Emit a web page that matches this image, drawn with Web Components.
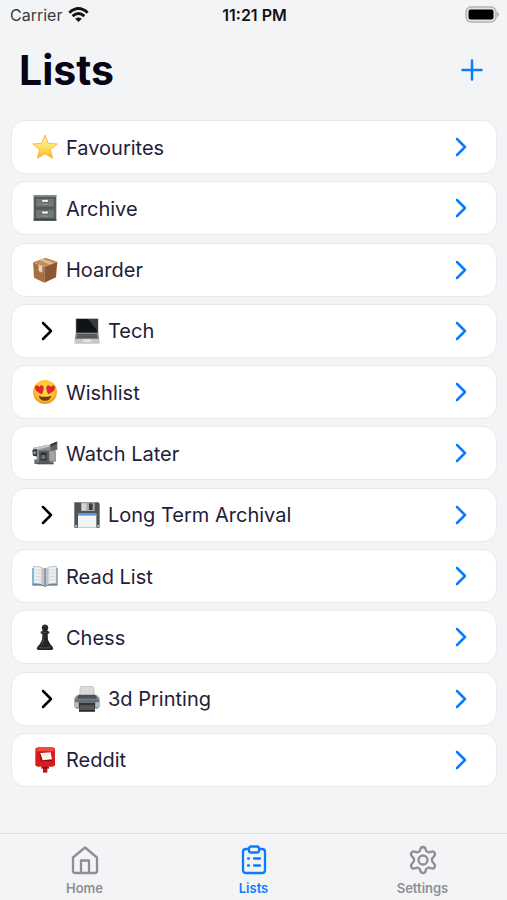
<!DOCTYPE html>
<html lang="en">
<head>
<meta charset="utf-8">
<meta name="viewport" content="width=device-width, initial-scale=1">
<title>Lists</title>
<style>
    body {
        margin: 0;
        background: #f3f4f6;
        color: #1f2138;
        font-family: Inter, "Liberation Sans", sans-serif;
    }
</style>
</head>
<body>
<lists-screen></lists-screen>

<script>
const EMOJI = {
    star: `
        <linearGradient id="g" x1="0" y1="0" x2="0" y2="1"><stop offset="0" stop-color="#fff3b0"/><stop offset=".5" stop-color="#ffe36a"/><stop offset="1" stop-color="#fbb414"/></linearGradient>
        <path d="M39 3 49 28 76 30 55 47 62 73 39 59 16 73 23 47 2 30 29 28Z" fill="url(#g)" stroke="#f2b13c" stroke-width="2.5" stroke-linejoin="round"/>`,
    cabinet: `
        <path d="M5 1h68v76H5z" fill="#59605f"/>
        <path d="M5 1h68v5H5z" fill="#7d8584"/>
        <path d="M11 10h56v26H11zM11 43h56v27H11z" fill="#727978" stroke="#454b4b" stroke-width="2"/>
        <path d="M29 13h20v9H29zM29 48h20v9H29z" fill="#f6f7f7" stroke="#3f4545" stroke-width="2"/>
        <path d="M31 26h16v4H31zM31 61h16v4H31z" fill="#8b9190"/>
        <path d="M5 72h68v5H5z" fill="#404646"/>`,
    box: `
        <path d="M3 16 37 29V77L6 62Z" fill="#a86f3f"/>
        <path d="M37 29 76 14 72 61 37 77Z" fill="#8d5831"/>
        <path d="M3 16 41 2 76 14 37 29Z" fill="#c48b58"/>
        <path d="M22 9 32 5 65 18 54 23Z" fill="#dfbd91"/>
        <path d="M20 23 31 27V47L20 42Z" fill="#e3d4c3"/>`,
    laptop: `
        <path d="M5 1h68v47H5z" fill="#96999b"/>
        <path d="M7 3h64v41H7z" fill="#111314"/>
        <path d="M42 3h29v37z" fill="#383b3d"/>
        <path d="M5 46h68l3 24H2z" fill="#818486"/>
        <path d="M10 49h58l2 11H8z" fill="#4b4e50"/>
        <path d="M9 53h61M8 57h62" stroke="#888b8d" stroke-width="1"/>
        <path d="M3 63h72l2 14H1z" fill="#c4c6c7"/>
        <path d="M28 64h22l2 9H26z" fill="#e3e4e5"/>`,
    hearts: `
        <radialGradient id="g" cx=".5" cy=".4" r=".6"><stop offset="0" stop-color="#ffe24f"/><stop offset=".65" stop-color="#fdc42e"/><stop offset="1" stop-color="#ef9219"/></radialGradient>
        <circle cx="39" cy="39" r="36" fill="url(#g)"/>
        <path d="M29 46C17 41 8 34 9 25 10 18 18 18 22 24 26 17 34 17 35 25 36 32 33 40 29 46Z" fill="#e6262c"/>
        <path d="M49 46C61 41 70 34 69 25 68 18 60 18 56 24 52 17 44 17 43 25 42 32 45 40 49 46Z" fill="#e6262c"/>
        <path d="M20 50q19 7 38 0-4 15-19 15T20 50Z" fill="#753810"/>`,
    camera: `
        <path d="M4 23 46 14 62 16V68H14V49H7L2 43Z" fill="#8d9092"/>
        <path d="M3 24 45 14 58 18 17 29Z" fill="#c7c9ca"/>
        <path d="M56 16 76 5V29L56 34Z" fill="#606365"/>
        <path d="M55 13 72 5 76 5 73 12 55 20Z" fill="#37393a"/>
        <path d="M1 30 15 27V49L3 47Z" fill="#36393b"/>
        <circle cx="8" cy="38" r="5" fill="#82878a"/>
        <path d="M21 32H53V68H21Z" fill="#55585a"/>
        <path d="M26 38H43V61H26Z" fill="#2b2d2f"/>
        <circle cx="34" cy="51" r="7" fill="#707477"/>
        <path d="M51 32H70V64H51Z" fill="#a2a4a5" stroke="#66696b" stroke-width="2"/>
        <path d="M7 58h12v14H7z" fill="#717476"/>
        <path d="M15 67H65V73H15Z" fill="#515456"/>`,
    floppy: `
        <path d="M1 1h72l4 4v72H1z" fill="#505254"/>
        <path d="M21 1h41v26H21z" fill="#a9acad"/>
        <path d="M45 4h11v20H45z" fill="#3a3d3e"/>
        <path d="M24 4h13v21H24z" fill="#d3d4d5"/>
        <path d="M12 35h55v42H12z" fill="#f2f3f3"/>
        <path d="M12 35h55v6H12z" fill="#5e9ddb"/>
        <path d="M4 69h5v5H4zM70 69h5v5h-5z" fill="#ced0d1"/>`,
    book: `
        <path d="M1 15H77V68H1Z" fill="#4c93bb"/>
        <path d="M5 10Q25 8 39 18 53 8 73 10V62Q53 60 39 68 25 60 5 62Z" fill="#eceeef" stroke="#a9afb2" stroke-width="2"/>
        <path d="M39 18V67L28 62V13ZM39 18V67L50 62V13Z" fill="#c0c5c8"/>
        <path d="M39 18v50" stroke="#666f75" stroke-width="3"/>
        <path d="M11 21q9-2 18 2M11 31q9-2 18 2M11 41q9-2 18 2M11 51q9-2 18 2M67 21q-9-2-18 2M67 31q-9-2-18 2M67 41q-9-2-18 2M67 51q-9-2-18 2" fill="none" stroke="#c8cdd0" stroke-width="2"/>
        <path d="M4 64q20-2 35 6 15-8 35-6" fill="none" stroke="#73838e" stroke-width="3"/>`,
    pawn: `
        <path d="M32 4q7-5 14 0l3 7-3 9 6 3v5l-5 2 1 18 8 14 5 5 3 7-4 4q-21 4-42 0l-4-4 3-7 5-5 8-14 1-18-5-2v-5l6-3-3-9Z" fill="#242626"/>
        <path d="M34 7q4-3 7 0M31 25h12M34 33v17l-6 13M20 70q18 4 35 0" fill="none" stroke="#5d6161" stroke-width="2"/>`,
    printer: `
        <path d="M19 4q2-3 6-3h28q4 0 6 3l3 31H16Z" fill="#d9dbdb" stroke="#b0b3b3" stroke-width="2"/>
        <path d="M8 28H70L77 37V62L71 68H7L1 62V37Z" fill="#8c969c"/>
        <path d="M14 26H64L70 38H8Z" fill="#4c5257"/>
        <path d="M3 40H75V49H3Z" fill="#697178"/>
        <path d="M3 49h10v14H3zM65 49h10v14H65z" fill="#b4bfc6"/>
        <path d="M15 50H63V76H15Z" fill="#35383b"/>
        <path d="M18 58H60L63 72H15Z" fill="#54585b"/>
        <path d="M15 72H63V77H15Z" fill="#242628"/>`,
    postbox: `
        <path d="M33 56H46V77H33Z" fill="#b81718"/>
        <path d="M10 9q0-8 9-8h41q9 0 9 8v43q0 7-9 7H19q-9 0-9-7Z" fill="#d91b1f"/>
        <path d="M13 8q1-5 8-5h37q7 0 8 5v5H13Z" fill="#f3483b"/>
        <path d="M22 16H57L61 43H27Z" fill="#8c1012"/>
        <path d="M25 18 56 16 60 37 32 40Z" fill="#fff6ef"/>
        <path d="M25 18 43 28 56 16" fill="none" stroke="#dfc9c1" stroke-width="2"/>
        <path d="M28 59h23v6H28z" fill="#8f1113"/>`
};

const TAB_ICONS = {
    home: '<path d="M3 12.5 15 2.5l12 10V26q0 2-2 2H5q-2 0-2-2ZM11 28V15.5h8V28"/>',
    lists: '<path d="M10 4H7Q4 4 4 7v18q0 3 3 3h16q3 0 3-3V7q0-3-3-3h-3"/><rect x="10" y="1.5" width="10" height="6" rx="2"/><path d="M9 13.5h1M15 13.5h6M9 20.5h1M15 20.5h6"/>',
    settings: '<path d="M12.3 4.5Q12.7 2 15 2t2.7 2.5q.5 2.500 3 2.800 1 .1 2.200-.6 2.400-1 3.600 1 1.200 2-.6 3.800-2 1.500-2 3.500t2 3.500q1.800 1.800.6 3.800-1.200 2-3.600 1-1.200-.7-2.200-.6-2.500.3-3 2.800Q17.300 28 15 28t-2.700-2.500q-.5-2.500-3-2.800-1-.1-2.200.6-2.400 1-3.600-1-1.200-2 .6-3.800 2-1.500 2-3.500t-2-3.500Q2.300 9.700 3.500 7.700q1.200-2 3.600-1 1.200.7 2.200.6 2.500-.3 3-2.800Z"/><circle cx="15" cy="15" r="4.5"/>'
};

class StatusBar extends HTMLElement {
    constructor() {
        super();
        this.attachShadow({ mode: 'open' });
        this.shadowRoot.innerHTML = `
        <style>
            :host {
                display: grid;
                grid-template-columns: 1fr auto 1fr;
                align-items: center;
                height: 30px;
                padding: 0 8px 0 10px;
                font-size: 16px;
                color: #111214;
            }
            .carrier { display: flex; align-items: center; gap: 6px; color: #3a3b3e; }
            .time { font-weight: 600; }
            .battery { justify-self: end; }
            svg { display: block; }
        </style>
        <span class="carrier">Carrier
            <svg width="21" height="16" viewBox="0 0 21 16" fill="none" stroke="#111214" stroke-width="2.8" aria-hidden="true">
                <path d="M1.3 5.7Q10.5-2.7 19.7 5.7M4.6 9.1q5.9-5.2 11.8 0"/>
                <path d="M7.200 11.700q3.300-2.500 6.600 0L10.500 15Z" fill="#111214" stroke="none"/>
            </svg>
        </span>
        <span class="time">11:21 PM</span>
        <svg class="battery" width="34" height="18" viewBox="0 0 34 18" role="img" aria-label="Battery full">
            <rect x="1" y="1" width="30" height="15" rx="5" fill="#e5e5e5" stroke="#b2b3b4" stroke-width="1.5"/>
            <rect x="3.500" y="3.500" width="25" height="10" rx="2" fill="#000"/>
            <path d="M32 6q2 .7 2 2.500t-2 2.500Z" fill="#b2b3b4"/>
        </svg>`;
    }
}

class PageHeader extends HTMLElement {
    constructor() {
        super();
        this.attachShadow({ mode: 'open' });
        this.shadowRoot.innerHTML = `
        <style>
            :host {
                display: flex;
                align-items: center;
                justify-content: space-between;
                padding: 15px 19px 25px;
            }
            h1 { margin: 0; font-size: 41px; line-height: 50px; font-weight: 700; color: #050516; }
            button { display: flex; padding: 4px; border: 0; background: none; color: #0a7cff; }
        </style>
        <h1><slot></slot></h1>
        <button type="button" aria-label="New list">
            <svg width="24" height="24" viewBox="0 0 24 24" fill="none" stroke="currentColor" stroke-width="2.5" stroke-linecap="round">
                <path d="M12 2.500v19M2.500 12h19"/>
            </svg>
        </button>`;
    }
}

class ListRow extends HTMLElement {
    constructor() {
        super();
        this.attachShadow({ mode: 'open' });
        const chevron = '<svg class="chevron" width="12" height="20" viewBox="0 0 12 20" aria-hidden="true"><path d="M2 2l8 8-8 8"/></svg>';
        const expander = this.hasAttribute('nested')
            ? `<button type="button" aria-label="Expand" aria-expanded="false">${chevron}</button>` : '';
        this.shadowRoot.innerHTML = `
        <style>
            :host {
                display: flex;
                align-items: stretch;
                box-sizing: border-box;
                height: 54px;
                padding-left: 20px;
                border: 1px solid #e7e9ec;
                border-radius: 14px;
                background: #fff;
            }
            button {
                display: flex;
                align-items: center;
                padding: 0 21px 0 9px;
                border: 0;
                background: none;
                color: #000;
            }
            a {
                display: flex;
                flex: 1;
                align-items: center;
                gap: 8px;
                padding-right: 29px;
                color: inherit;
                text-decoration: none;
                font-size: 20px;
                line-height: 28px;
            }
            .name { flex: 1; padding-top: 1px; }
            .chevron { fill: none; stroke: currentColor; stroke-width: 2.5; stroke-linecap: round; stroke-linejoin: round; }
            a .chevron { color: #0a7cff; }
        </style>
        ${expander}
        <a href="#">
            <svg width="26" height="26" viewBox="0 0 78 78" aria-hidden="true">${EMOJI[this.getAttribute('icon')]}</svg>
            <span class="name"><slot></slot></span>
            ${chevron}
        </a>`;
    }
}

class TabItem extends HTMLElement {
    constructor() {
        super();
        this.attachShadow({ mode: 'open' });
        this.shadowRoot.innerHTML = `
        <style>
            :host { display: block; flex: 1; color: #8e8f92; }
            :host([active]) { color: #0a7cff; }
            a {
                display: flex;
                flex-direction: column;
                align-items: center;
                gap: 5px;
                color: inherit;
                text-decoration: none;
                font-size: 13px;
                line-height: 16px;
                font-weight: 600;
            }
            svg { fill: none; stroke: currentColor; stroke-width: 2.3; stroke-linecap: round; stroke-linejoin: round; }
        </style>
        <a href="#">
            <svg width="30" height="30" viewBox="0 0 30 30" aria-hidden="true">${TAB_ICONS[this.getAttribute('icon')]}</svg>
            <slot></slot>
        </a>`;
    }
}

class ListsScreen extends HTMLElement {
    constructor() {
        super();
        this.attachShadow({ mode: 'open' });
        this.shadowRoot.innerHTML = `
        <style>
            :host { display: flex; flex-direction: column; min-height: 100vh; }
            main {
                display: flex;
                flex: 1;
                flex-direction: column;
                justify-content: space-between;
                gap: 7px;
                padding: 0 10px 46px 11px;
            }
            nav { display: flex; padding: 11px 0 4px; border-top: 1px solid #dfe1e4; }
        </style>
        <status-bar></status-bar>
        <page-header>Lists</page-header>
        <main>
            <list-row icon="star">Favourites</list-row>
            <list-row icon="cabinet">Archive</list-row>
            <list-row icon="box">Hoarder</list-row>
            <list-row icon="laptop" nested>Tech</list-row>
            <list-row icon="hearts">Wishlist</list-row>
            <list-row icon="camera">Watch Later</list-row>
            <list-row icon="floppy" nested>Long Term Archival</list-row>
            <list-row icon="book">Read List</list-row>
            <list-row icon="pawn">Chess</list-row>
            <list-row icon="printer" nested>3d Printing</list-row>
            <list-row icon="postbox">Reddit</list-row>
        </main>
        <nav aria-label="Tabs">
            <tab-item icon="home">Home</tab-item>
            <tab-item icon="lists" active>Lists</tab-item>
            <tab-item icon="settings">Settings</tab-item>
        </nav>`;
    }
}

customElements.define('status-bar', StatusBar);
customElements.define('page-header', PageHeader);
customElements.define('list-row', ListRow);
customElements.define('tab-item', TabItem);
customElements.define('lists-screen', ListsScreen);
</script>
</body>
</html>
